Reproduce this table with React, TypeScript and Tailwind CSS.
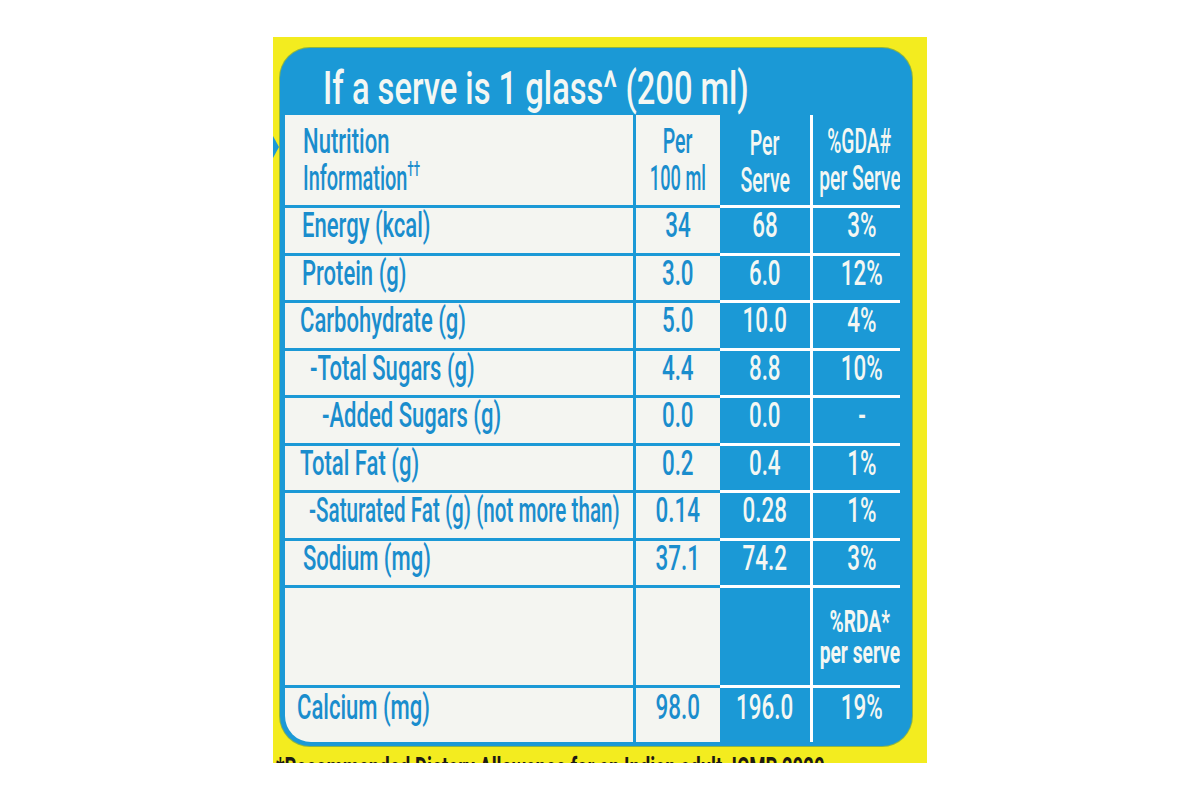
const rows = [
  { label: "Energy (kcal)", pad: "pl-[17px]", per100: "34", serve: "68", gda: "3%" },
  { label: "Protein (g)", pad: "pl-[17px]", per100: "3.0", serve: "6.0", gda: "12%" },
  { label: "Carbohydrate (g)", pad: "pl-[15px]", per100: "5.0", serve: "10.0", gda: "4%" },
  { label: "-Total Sugars (g)", pad: "pl-[25px]", per100: "4.4", serve: "8.8", gda: "10%" },
  { label: "-Added Sugars (g)", pad: "pl-[37px]", per100: "0.0", serve: "0.0", gda: "-" },
  { label: "Total Fat (g)", pad: "pl-[15px]", per100: "0.2", serve: "0.4", gda: "1%" },
  { label: "-Saturated Fat (g) (not more than)", pad: "pl-[24px]", per100: "0.14", serve: "0.28", gda: "1%", narrow: true },
  { label: "Sodium (mg)", pad: "pl-[18px]", per100: "37.1", serve: "74.2", gda: "3%" },
];

const Label = ({ children, narrow }: { children: React.ReactNode; narrow?: boolean }) => (
  <span
    className={
      narrow
        ? "inline-block origin-left scale-x-[0.59] whitespace-nowrap"
        : "inline-block origin-left scale-x-[0.63] whitespace-nowrap"
    }
  >
    {children}
  </span>
);

const Num = ({ children }: { children: React.ReactNode }) => (
  <span className="inline-block scale-x-[0.64] whitespace-nowrap">{children}</span>
);

const App = () => {
  return (
    <div className="min-h-screen bg-white pt-[37px] font-['Roboto',sans-serif] font-medium">
      <div className="relative mx-auto h-[726px] w-[654px] overflow-hidden bg-[#f3ec1f] pl-[7px] pr-[15px] pt-[11px]">
        <svg className="absolute left-0 top-[99px]" width="7" height="22" viewBox="0 0 7 22">
          <polygon points="0,0 6,11 0,22" fill="#1b99d6" />
        </svg>

        <div className="overflow-hidden rounded-[30px] bg-[#1b99d6] pb-[4px] pl-[5px] pr-[12px] shadow-[0_0_0_1px_#8cb545]">
          {/* title band */}
          <div className="h-[67px] pl-[38px] pt-[13px] text-[46px] leading-[54px] text-[#f4f7f3]">
            <span className="inline-block origin-left scale-x-[0.71] whitespace-nowrap">If a serve is 1 glass^ (200 ml)</span>
          </div>

          <div className="overflow-hidden rounded-bl-[26px] text-[35px]">
            {/* header row */}
            <div className="flex h-[93px]">
              <div className="w-[351px] border-b-[3px] border-r-[3px] border-[#1b99d6] bg-[#f4f5f1] pl-[18px] pt-[8px] leading-[37px] text-[#1a8dcd]">
                <div><Label>Nutrition</Label></div>
                <div>
                  <span className="inline-block origin-left scale-x-[0.57] whitespace-nowrap">
                    Information<span className="relative -top-[14px] text-[20px]">††</span>
                  </span>
                </div>
              </div>
              <div className="flex w-[84px] flex-col items-center border-b-[3px] border-[#1b99d6] bg-[#f4f5f1] pt-[8px] leading-[37px] text-[#1a8dcd]">
                <span className="inline-block scale-x-[0.56] whitespace-nowrap">Per</span>
                <span className="inline-block scale-x-[0.52] whitespace-nowrap">100 ml</span>
              </div>
              <div className="flex w-[93px] flex-col items-center border-b-[3px] border-r-[3px] border-white pt-[10px] leading-[37px] text-[#f4f7f3]">
                <span className="inline-block scale-x-[0.56] whitespace-nowrap">Per</span>
                <span className="inline-block scale-x-[0.56] whitespace-nowrap">Serve</span>
              </div>
              <div className="flex w-[87px] flex-col items-center border-b-[3px] border-white pl-[6px] pt-[8px] leading-[37px] text-[#f4f7f3]">
                <span className="inline-block scale-x-[0.55] whitespace-nowrap">%GDA#</span>
                <span className="inline-block scale-x-[0.55] whitespace-nowrap">per Serve</span>
              </div>
            </div>

            {rows.map((row) => (
              <div key={row.label} className="flex h-[47.5px] leading-[30px]">
                <div className={`w-[351px] border-b-[3px] border-r-[3px] border-[#1b99d6] bg-[#f4f5f1] pt-[3px] text-[#1a8dcd] ${row.pad}`}>
                  <Label narrow={row.narrow}>{row.label}</Label>
                </div>
                <div className="flex w-[84px] justify-center border-b-[3px] border-[#1b99d6] bg-[#f4f5f1] pt-[3px] text-[#1a8dcd]">
                  <Num>{row.per100}</Num>
                </div>
                <div className="flex w-[93px] justify-center border-b-[3px] border-r-[3px] border-white pt-[3px] text-[#f4f7f3]">
                  <Num>{row.serve}</Num>
                </div>
                <div className="flex w-[87px] justify-center border-b-[3px] border-white pl-[10px] pt-[3px] text-[#f4f7f3]">
                  <Num>{row.gda}</Num>
                </div>
              </div>
            ))}

            {/* %RDA row */}
            <div className="flex h-[100px]">
              <div className="w-[351px] border-b-[3px] border-r-[3px] border-[#1b99d6] bg-[#f4f5f1]" />
              <div className="w-[84px] border-b-[3px] border-[#1b99d6] bg-[#f4f5f1]" />
              <div className="w-[93px] border-b-[3px] border-r-[3px] border-white" />
              <div className="flex w-[87px] flex-col items-center justify-center border-b-[3px] border-white pl-[6px] text-[31px] font-bold leading-[31px] text-[#f4f7f3]">
                <span className="inline-block scale-x-[0.62] whitespace-nowrap">%RDA*</span>
                <span className="inline-block scale-x-[0.62] whitespace-nowrap">per serve</span>
              </div>
            </div>

            {/* calcium row */}
            <div className="flex h-[54px] leading-[30px]">
              <div className="w-[351px] border-r-[3px] border-[#1b99d6] bg-[#f4f5f1] pl-[12px] pt-[5px] text-[#1a8dcd]">
                <Label>Calcium (mg)</Label>
              </div>
              <div className="flex w-[84px] justify-center bg-[#f4f5f1] pt-[5px] text-[#1a8dcd]">
                <Num>98.0</Num>
              </div>
              <div className="flex w-[93px] justify-center border-r-[3px] border-white pt-[5px] text-[#f4f7f3]">
                <Num>196.0</Num>
              </div>
              <div className="flex w-[87px] justify-center pl-[10px] pt-[5px] text-[#f4f7f3]">
                <Num>19%</Num>
              </div>
            </div>
          </div>
        </div>

        <div className="-ml-[4px] mt-[7px] text-[30px] font-bold leading-[30px] text-[#1d1a14]">
          <span className="inline-block origin-left scale-x-[0.62] whitespace-nowrap">
            *Recommended Dietary Allowance for an Indian adult, ICMR 2020
          </span>
        </div>
      </div>
    </div>
  );
};

export default App;
